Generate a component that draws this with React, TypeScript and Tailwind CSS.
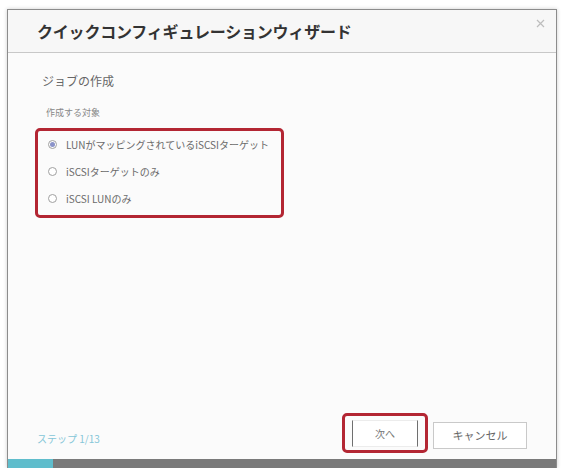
import React, { useState } from 'react';

const font = { fontFamily: '"Noto Sans CJK JP", "Noto Sans", sans-serif' };

const options = [
  'LUNがマッピングされているiSCSIターゲット',
  'iSCSIターゲットのみ',
  'iSCSI LUNのみ',
];

const Radio: React.FC<{ checked: boolean }> = ({ checked }) => (
  <span className="flex size-[9px] items-center justify-center rounded-full border border-[#a0a0a0] bg-white">
    {checked && <span className="size-[5px] rounded-full bg-[#8b93c9]" />}
  </span>
);

export default function App() {
  const [selected, setSelected] = useState(0);

  return (
    <div className="h-[468px] w-[562px] bg-white px-[7px] pt-[9px]" style={font}>
      <div className="flex h-[459px] w-[550px] flex-col border border-b-0 border-[#8c8c8c] shadow-[0_0_4px_rgba(0,0,0,0.2)]">
        {/* header */}
        <div className="relative flex h-[43px] shrink-0 items-center border-b border-[#c8c8c8] bg-[#f7f7f7] pl-[29px]">
          <h1 className="text-[16px] font-bold leading-none tracking-[-0.2px] text-[#333]">
            クイックコンフィギュレーションウィザード
          </h1>
          <svg
            className="absolute right-[11px] top-[9px]"
            width="9"
            height="9"
            viewBox="0 0 9 9"
            stroke="#bdbdbd"
            strokeWidth="1.2"
          >
            <path d="M1 1 L8 8 M8 1 L1 8" />
          </svg>
        </div>

        {/* body */}
        <div className="flex flex-1 flex-col bg-[#fbfbfb] pl-[27px]">
          <p className="ml-[7px] mt-[20px] text-[12px] leading-[16px] text-[#666]">ジョブの作成</p>
          <p className="ml-[11px] mt-[17px] text-[9px] leading-[14px] text-[#888]">作成する対象</p>

          <div className="mt-[8px] flex h-[90px] w-[249px] flex-col rounded-[5px] border-[3px] border-[#b32633] pl-[10px]">
            {options.map((label, i) => (
              <label
                key={label}
                className="flex h-[27px] cursor-pointer items-center gap-[9px]"
                onClick={() => setSelected(i)}
              >
                <Radio checked={selected === i} />
                <span className="text-[10px] leading-none text-[#6a6a6a]">{label}</span>
              </label>
            ))}
          </div>

          <div className="mt-auto flex items-end pb-[6px] pr-[29px]">
            <span className="mb-[9px] ml-[2px] text-[10px] leading-none text-[#85c6d8]">ステップ 1/13</span>
            <div className="ml-auto rounded-[5px] border-[3px] border-[#b32633] px-[7px] py-[3px]">
              <button className="h-[27px] w-[66px] border-x border-y border-x-[#6f6f6f] border-y-[#ececec] bg-white text-[10px] text-[#777]">
                次へ
              </button>
            </div>
            <button className="mb-[4px] ml-[5px] h-[27px] w-[94px] border border-[#c9c9c9] bg-white text-[11px] text-[#666]">
              キャンセル
            </button>
          </div>
        </div>

        {/* progress */}
        <div className="flex h-[9px] shrink-0 bg-[#7a7a7a]">
          <div className="w-[45px] bg-[#5fbdcc]" />
        </div>
      </div>
    </div>
  );
}
